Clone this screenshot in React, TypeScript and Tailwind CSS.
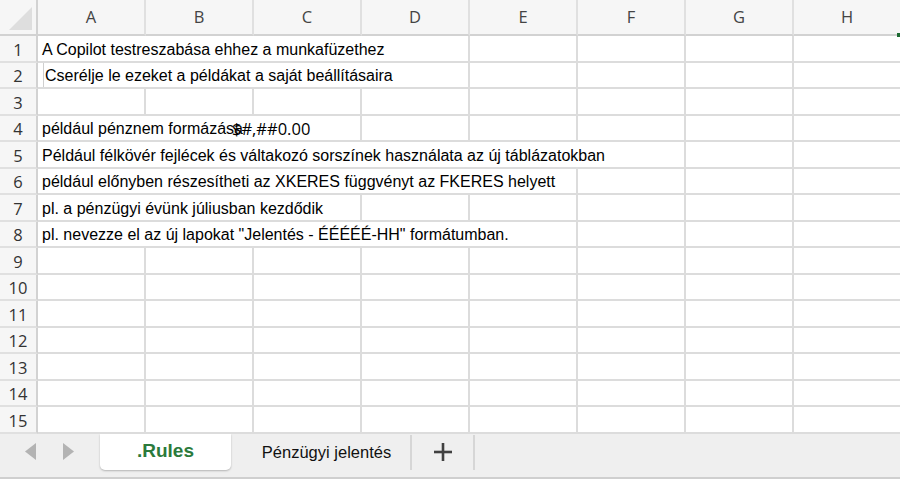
import React from "react";

const COLS = ["A", "B", "C", "D", "E", "F", "G", "H"];

type RowText = { text?: string; width?: number; extra?: boolean; leftLine?: boolean };

const ROWS: RowText[] = [
  { text: "A Copilot testreszabása ehhez a munkafüzethez" },
  { text: "Cserélje le ezeket a példákat a saját beállításaira", width: 405, leftLine: true },
  {},
  { text: "például pénznem formázása", extra: true, width: 276 },
  { text: "Például félkövér fejlécek és váltakozó sorszínek használata az új táblázatokban" },
  { text: "például előnyben részesítheti az XKERES függvényt az FKERES helyett" },
  { text: "pl. a pénzügyi évünk júliusban kezdődik" },
  { text: "pl. nevezze el az új lapokat \"Jelentés - ÉÉÉÉÉ-HH\" formátumban." },
  {},
  {},
  {},
  {},
  {},
  {},
  {},
];

export default function App() {
  return (
    <div className="relative w-[900px] h-[479px] overflow-hidden bg-white flex flex-col" style={{ fontFamily: '"Liberation Sans", Arial, sans-serif' }}>
      {/* Column headers */}
      <div className="flex h-[36px] shrink-0">
        <div className="w-[38px] shrink-0 bg-[#f6f6f6] border-r-2 border-b-2 border-[#d2d2d2] flex items-end justify-end pr-[3px] pb-[3px]">
          <svg width="24" height="24" viewBox="0 0 24 24">
            <polygon points="23,0 23,23 0,23" fill="#dedede" />
          </svg>
        </div>
        {COLS.map((c) => (
          <div
            key={c}
            className="w-[108px] shrink-0 bg-[#f6f6f6] border-r-2 border-b-2 border-r-[#e0e0e0] border-b-[#d2d2d2] flex items-center justify-center text-[16.5px] text-[#444]"
            style={{ fontFamily: '"Open Sans", sans-serif' }}
          >
            {c}
          </div>
        ))}
      </div>
      <div className="absolute left-[897px] top-[33px] w-[3px] h-[4px] bg-[#1e6b33]" />

      {/* Rows */}
      {ROWS.map((r, i) => (
        <div key={i} className="flex h-[26.5px] shrink-0">
          <div
            className="w-[38px] shrink-0 bg-[#f6f6f6] border-r-2 border-b-2 border-r-[#d2d2d2] border-b-[#e0e0e0] flex items-end justify-center pb-[1px] text-[16.5px] leading-[20px] text-[#333]"
            style={{ fontFamily: '"Open Sans", sans-serif' }}
          >
            {i + 1}
          </div>
          {COLS.map((c, ci) => (
            <div
              key={c}
              className={`w-[108px] shrink-0 border-r-2 border-b-2 border-[#dcdcdc] ${ci < 2 ? "relative" : ""}`}
            >
              {ci === 0 && r.text && (
                <div
                  className={`absolute left-[4px] top-0 h-full z-10 bg-white flex items-end pb-[2px] pr-[3px] whitespace-nowrap text-[16px] leading-[18px] text-black ${r.leftLine ? "border-l border-[#cfcfcf] left-[5px] pl-[1px]" : ""}`}
                  style={r.width ? { width: r.width } : undefined}
                >
                  {r.text}
                </div>
              )}
              {ci === 1 && r.extra && (
                <div
                  className="absolute left-[86px] top-0 h-full z-20 flex items-end pb-[1px] whitespace-nowrap text-[16.5px] leading-[20px] text-black"
                  style={{ fontFamily: '"Open Sans", sans-serif' }}
                >
                  $#,##0.00
                </div>
              )}
            </div>
          ))}
        </div>
      ))}

      {/* Tab bar */}
      <div className="flex-1 bg-[#efefef] border-b-2 border-[#cfcfcf] flex items-start">
        <div className="w-[100px] shrink-0 h-[36px] flex items-center pl-[25px] gap-[27px]">
          <svg width="11" height="17" viewBox="0 0 11 17">
            <polygon points="11,0 11,17 0,8.5" fill="#b3b3b3" />
          </svg>
          <svg width="11" height="17" viewBox="0 0 11 17">
            <polygon points="0,0 0,17 11,8.5" fill="#b3b3b3" />
          </svg>
        </div>
        <div className="w-[131px] shrink-0 h-[36px] bg-white rounded-b-[5px] shadow-[0_1px_2px_rgba(0,0,0,0.25)] flex items-center justify-center text-[19px] font-bold text-[#2b7a3b]">
          .Rules
        </div>
        <div className="w-[181px] shrink-0 h-[35px] mt-[1px] flex items-center justify-center pl-[12px] border-r-2 border-[#d6d6d6] text-[16.5px] text-[#111]">
          Pénzügyi jelentés
        </div>
        <div className="w-[63px] shrink-0 h-[35px] mt-[1px] flex items-center justify-center border-r-2 border-[#d6d6d6]">
          <svg width="18" height="18" viewBox="0 0 18 18">
            <rect x="0" y="7.7" width="18" height="2.6" fill="#404040" />
            <rect x="7.7" y="0" width="2.6" height="18" fill="#404040" />
          </svg>
        </div>
      </div>
    </div>
  );
}
